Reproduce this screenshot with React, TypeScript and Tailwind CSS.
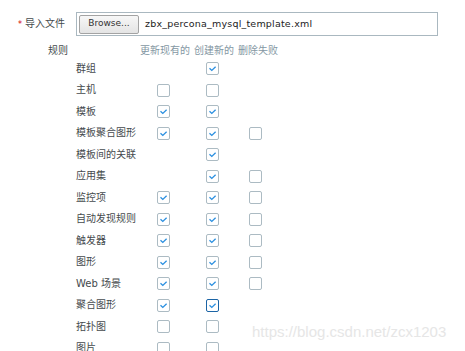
import React from "react";

type Cell = 0 | 1 | 2 | 3; // 0 none, 1 empty, 2 checked, 3 checked focused

const rows: { label: string; c: [Cell, Cell, Cell] }[] = [
  { label: "群组", c: [0, 2, 0] },
  { label: "主机", c: [1, 1, 0] },
  { label: "模板", c: [2, 2, 0] },
  { label: "模板聚合图形", c: [2, 2, 1] },
  { label: "模板间的关联", c: [0, 2, 0] },
  { label: "应用集", c: [0, 2, 1] },
  { label: "监控项", c: [2, 2, 1] },
  { label: "自动发现规则", c: [2, 2, 1] },
  { label: "触发器", c: [2, 2, 1] },
  { label: "图形", c: [2, 2, 1] },
  { label: "Web 场景", c: [2, 2, 1] },
  { label: "聚合图形", c: [2, 3, 0] },
  { label: "拓扑图", c: [1, 1, 0] },
  { label: "图片", c: [1, 1, 0] },
];

function Box({ v }: { v: Cell }) {
  if (v === 0) return <div className="w-[13px] h-[13px]" />;
  return (
    <div
      className={
        "w-[13px] h-[13px] rounded-[2px] border bg-white flex items-center justify-center " +
        (v === 3 ? "border-[#1b64a5]" : "border-[#acbbc3]")
      }
    >
      {v >= 2 && (
        <svg width="11" height="11" viewBox="0 0 11 11">
          <path d="M2.5 5.2 L4.8 7.4 L8.6 3.8" fill="none" stroke="#2a8fe0" strokeWidth="1.3" />
        </svg>
      )}
    </div>
  );
}

export default function App() {
  const offs = ["ml-[17px]", "ml-[14px]", "ml-[11px]"];
  const widths = ["w-[52px]", "w-[46px]", "w-[45px]"];
  return (
    <div
      className="relative w-[465px] h-[351px] bg-white overflow-hidden text-[10px] text-[#454a4d]"
      style={{ fontFamily: '"DejaVu Sans", "Noto Sans CJK SC", sans-serif' }}
    >
      <div className="flex items-center pt-[12px]">
        <div className="w-[76px] pr-[11px] text-right leading-[14px]">
          <span className="text-[#d40000] text-[8px] mr-[3px]">*</span>导入文件
        </div>
        <div className="w-[362px] h-[24px] border border-[#aab8c0] flex items-center pl-[2px]">
          <div className="w-[60px] h-[19px] rounded-[2px] border border-[#a3a3a3] bg-gradient-to-b from-[#f7f7f7] to-[#e4e4e4] flex items-center justify-center text-[9px] text-[#333]">
            Browse...
          </div>
          <div className="ml-[6px] text-[9.5px] text-[#222] tracking-[0.2px]">zbx_percona_mysql_template.xml</div>
        </div>
      </div>
      <div className="flex mt-[8px]">
        <div className="w-[76px] pr-[8px] text-right leading-[14px]">规则</div>
        <div className="flex flex-col">
          <div className="flex h-[14px] items-center pl-[64px] text-[#8497a3] leading-[14px]">
            <div className="w-[54px]">更新现有的</div>
            <div className="w-[44px]">创建新的</div>
            <div className="w-[45px]">删除失败</div>
          </div>
          {rows.map((r) => (
            <div key={r.label} className="flex items-center h-[21.5px]">
              <div className="w-[64px] leading-[14px]">{r.label}</div>
              {r.c.map((v, i) => (
                <div key={i} className={widths[i] + " flex"}>
                  <div className={offs[i]}>
                    <Box v={v} />
                  </div>
                </div>
              ))}
            </div>
          ))}
        </div>
      </div>
      <div
        className="absolute left-[252px] top-[321px] text-[15px] text-[#e6e6e6]"
        style={{ fontFamily: '"Liberation Sans", Arial, sans-serif' }}
      >
        https://blog.csdn.net/zcx1203
      </div>
    </div>
  );
}
